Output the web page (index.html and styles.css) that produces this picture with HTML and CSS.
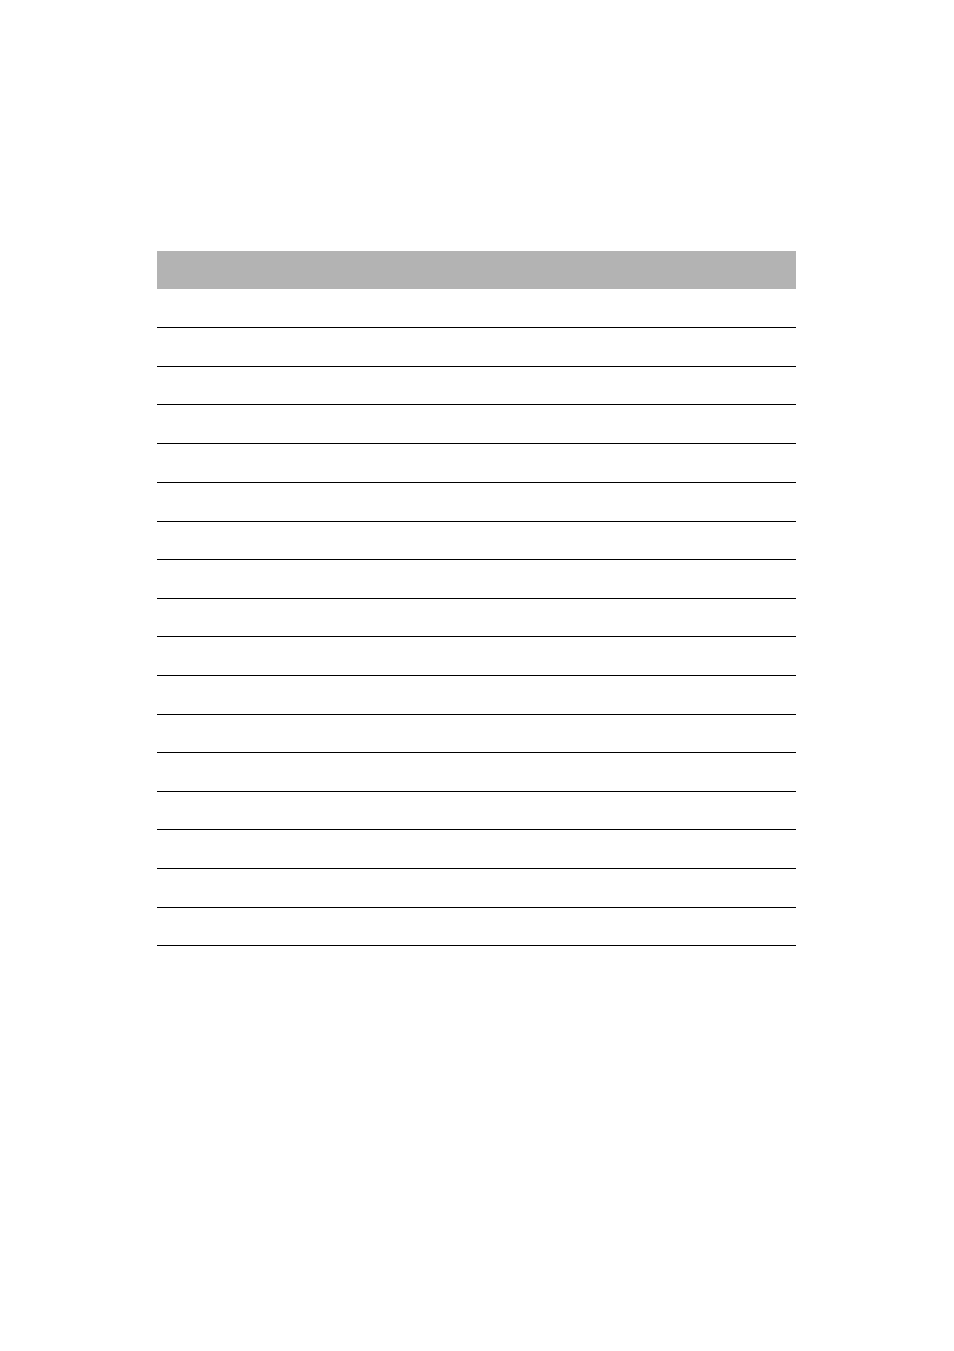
FILE: index.html
```html
<!DOCTYPE html>
<html>
<head>
<meta charset="utf-8">
<link rel="stylesheet" href="styles.css">
</head>
<body>
<div class="page">
  <div class="table">
    <div class="head"></div>
    <div class="row"></div>
    <div class="row"></div>
    <div class="row short"></div>
    <div class="row"></div>
    <div class="row"></div>
    <div class="row"></div>
    <div class="row short"></div>
    <div class="row"></div>
    <div class="row short"></div>
    <div class="row"></div>
    <div class="row"></div>
    <div class="row short"></div>
    <div class="row"></div>
    <div class="row short"></div>
    <div class="row"></div>
    <div class="row"></div>
    <div class="row short"></div>
  </div>
</div>
</body>
</html>
```
FILE: styles.css
```css
html, body {
  margin: 0;
  padding: 0;
  background: #ffffff;
  font-family: "Liberation Sans", Arial, sans-serif;
}
.page {
  width: 954px;
  height: 1351px;
  padding-top: 251px;
  padding-left: 157px;
  box-sizing: border-box;
}
.table {
  width: 639px;
  display: flex;
  flex-direction: column;
}
.head {
  height: 38px;
  background: #b3b3b3;
}
.row {
  height: 39px;
  box-sizing: border-box;
  border-bottom: 1px solid #000000;
}
.row.short {
  height: 38px;
}
```
